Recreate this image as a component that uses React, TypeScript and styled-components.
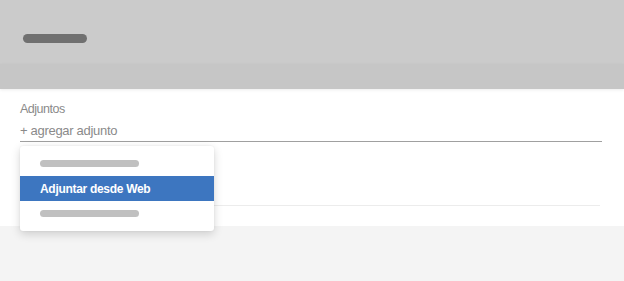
import React from "react";
import styled, { createGlobalStyle } from "styled-components";

const Global = createGlobalStyle`
  html, body { margin: 0; padding: 0; }
  body { font-family: "Liberation Sans", Arial, sans-serif; background: #f4f4f4; }
  #root { width: 624px; height: 281px; overflow: hidden; }
`;

const Page = styled.div`
  width: 624px;
  height: 281px;
  display: flex;
  flex-direction: column;
  background: #f4f4f4;
  position: relative;
`;

const Header = styled.div`
  height: 64px;
  background: #cbcbcb;
  display: flex;
  align-items: flex-start;
  padding: 34px 0 0 23px;
  box-sizing: border-box;
`;

const Pill = styled.div<{ $w: number; $h: number; $c: string }>`
  width: ${(p) => p.$w}px;
  height: ${(p) => p.$h}px;
  border-radius: ${(p) => p.$h / 2}px;
  background: ${(p) => p.$c};
`;

const SubBar = styled.div`
  height: 25px;
  background: #c6c6c6;
  box-shadow: 0 1px 3px rgba(0, 0, 0, 0.08);
  position: relative;
  z-index: 1;
`;

const Panel = styled.div`
  background: #fff;
  height: 137px;
  padding: 13px 22px 0 20px;
  box-sizing: border-box;
  position: relative;
`;

const Label = styled.div`
  font-size: 12.5px;
  letter-spacing: -0.5px;
  color: #8a8a8a;
  line-height: 14px;
`;

const Field = styled.div`
  margin-top: 7px;
  font-size: 13px;
  letter-spacing: -0.3px;
  color: #8a8a8a;
  line-height: 15px;
  padding-bottom: 3px;
  border-bottom: 1px solid #a0a0a0;
`;

const Row = styled.div`
  height: 63px;
  border-bottom: 1px solid #ececec;
  margin-right: 2px;
`;

const Menu = styled.div`
  position: absolute;
  left: 20px;
  top: 146px;
  width: 194px;
  height: 85px;
  background: #fff;
  border-radius: 3px;
  box-shadow: 0 3px 10px rgba(0, 0, 0, 0.16), 0 0 2px rgba(0, 0, 0, 0.08);
  display: flex;
  flex-direction: column;
  justify-content: center;
  z-index: 5;
`;

const Item = styled.div<{ $active?: boolean }>`
  height: 25px;
  display: flex;
  align-items: center;
  padding-left: 20px;
  background: ${(p) => (p.$active ? "#3d76c0" : "transparent")};
  color: #fff;
  font-size: 12px;
  letter-spacing: -0.3px;
  font-weight: 700;
`;

export default function App() {
  return (
    <>
      <Global />
      <Page>
        <Header>
          <Pill $w={64} $h={9} $c="#707070" />
        </Header>
        <SubBar />
        <Panel>
          <Label>Adjuntos</Label>
          <Field>+ agregar adjunto</Field>
          <Row />
        </Panel>
        <Menu>
          <Item>
            <Pill $w={99} $h={7} $c="#c0c0c0" />
          </Item>
          <Item $active>Adjuntar desde Web</Item>
          <Item>
            <Pill $w={99} $h={7} $c="#c0c0c0" />
          </Item>
        </Menu>
      </Page>
    </>
  );
}
